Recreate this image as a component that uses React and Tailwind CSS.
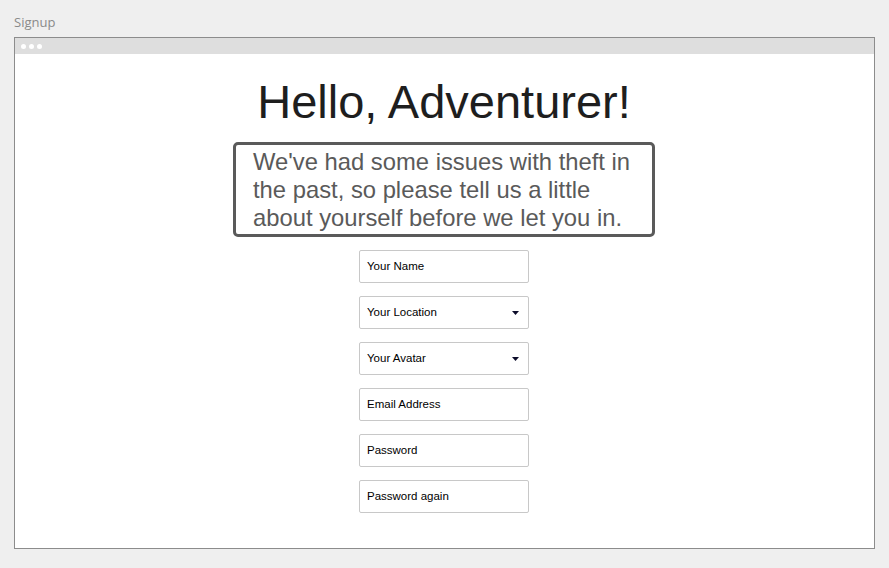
const fields = [
  { label: "Your Name" },
  { label: "Your Location", select: true },
  { label: "Your Avatar", select: true },
  { label: "Email Address" },
  { label: "Password" },
  { label: "Password again" },
];

export default function App() {
  return (
    <div className="h-[568px] w-[889px] bg-[#efefef] px-[14px] pt-[12px] font-['Open_Sans',sans-serif]">
      <div className="text-[13px] leading-[20px] text-[#8a8a8a]">Signup</div>
      <div className="mt-[5px] flex h-[512px] w-[861px] flex-col border border-[#8c8c8c] bg-white">
        <div className="flex h-[16px] items-center gap-[3px] bg-[#dedede] pl-[6px]">
          <span className="h-[5px] w-[5px] rounded-full bg-white" />
          <span className="h-[5px] w-[5px] rounded-full bg-white" />
          <span className="h-[5px] w-[5px] rounded-full bg-white" />
        </div>
        <div className="flex flex-col items-center font-['Liberation_Sans',Arial,sans-serif]">
          <h1 className="mr-[1px] mt-[22px] text-[47px] leading-[52px] text-[#1e1e1e]">Hello, Adventurer!</h1>
          <div className="mr-[1px] mt-[14px] w-[422px] rounded-[5px] border-[3px] border-[#5a5a5a] pb-[2px] pl-[17px] pr-[6px] pt-[3px] text-[23.8px] leading-[28px] text-[#5a5a5a]">
            We've had some issues with theft in the past, so please tell us a little about yourself before we let you in.
          </div>
          <div className="mr-[1px] mt-[13px] flex flex-col gap-[13px]">
            {fields.map((f) => (
              <div
                key={f.label}
                className="flex h-[33px] w-[170px] items-center justify-between rounded-[2px] border border-[#c8c8c8] pl-[7px] pr-[9px] pt-[1px] text-[11.5px] text-black"
              >
                <span>{f.label}</span>
                {f.select && (
                  <svg width="7" height="4" viewBox="0 0 7 4">
                    <path d="M0 0h7L3.5 4z" fill="#0c0c2a" />
                  </svg>
                )}
              </div>
            ))}
          </div>
        </div>
      </div>
    </div>
  );
}
